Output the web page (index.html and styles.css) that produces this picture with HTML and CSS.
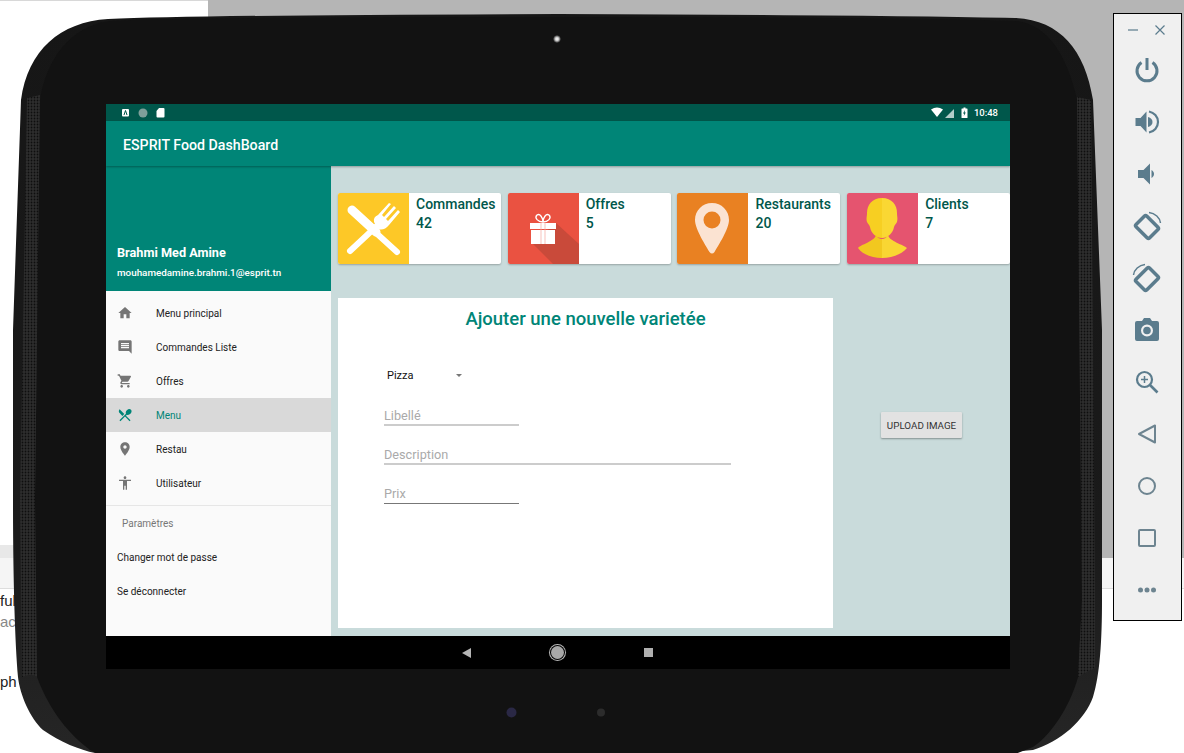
FILE: index.html
```html
<!DOCTYPE html>
<html lang="fr">
<head>
    <meta charset="UTF-8">
    <title>ESPRIT Food DashBoard</title>
    <link rel="stylesheet" href="styles.css">
</head>
<body>
<div class="desk">
    <div class="desk-top">
        <div class="desk-white"></div>
        <div class="desk-gray"></div>
    </div>
    <div class="desk-band">
        <div class="desk-band-left"></div>
        <div class="desk-gray"></div>
    </div>
    <div class="desk-strip"></div>
    <div class="desk-text">
        <p class="line-ful">ful</p>
        <p class="line-ace">ace</p>
        <p class="line-ph">ph</p>
    </div>
</div>

<svg class="shell" width="1184" height="753" viewBox="0 0 1184 753">
    <defs>
        <pattern id="grille" width="3" height="3" patternUnits="userSpaceOnUse">
            <rect width="3" height="3" fill="#2e2e2e"/>
            <circle cx="1.500" cy="1.500" r="0.900" fill="#0e0e0e"/>
        </pattern>
        <radialGradient id="lens">
            <stop offset="0" stop-color="#ffffff"/>
            <stop offset="0.450" stop-color="#c8c8c8"/>
            <stop offset="1" stop-color="#121212"/>
        </radialGradient>
        <linearGradient id="rim" x1="0" y1="0" x2="0" y2="1">
            <stop offset="0" stop-color="#161616"/>
            <stop offset="0.700" stop-color="#1a1a1a"/>
            <stop offset="1" stop-color="#262626"/>
        </linearGradient>
    </defs>
    <path fill="url(#rim)" d="M108 19 Q200 15 558 14 Q900 15 1015 18 C1060 20 1085 50 1093 100 L1102 330 L1102 600 C1102 640 1100 675 1093 697 C1085 720 1060 742 1033 750 L1000 753 L1000 760 L95 760 L95 753 C80 750 60 742 43 730 C30 718 20 695 18 677 C15 640 13 580 13 500 L13 330 L21 100 C28 50 60 22 108 19 Z"/>
    <path fill="#121212" d="M110 21 Q200 17 558 17 Q900 17 1015 21 C1050 24 1068 60 1077 100 L1082 600 L1078 677 C1072 700 1055 732 1033 747 L1000 760 L110 760 L90 750 C70 735 50 712 37 677 L35 500 L40 100 C46 60 70 26 110 21 Z"/>
    <path fill="url(#grille)" d="M27 98 L40 95 L35 500 L37 677 Q30 672 22 678 L20 500 Z"/>
    <path fill="url(#grille)" d="M1077 97 L1091 100 L1095 600 L1095 668 Q1086 672 1078 677 L1082 600 Z"/>
    <circle cx="557" cy="39" r="4" fill="url(#lens)"/>
    <circle cx="511.500" cy="712.500" r="5" fill="#2a2845"/>
    <circle cx="601" cy="712.500" r="4" fill="#2c2c2c"/>
</svg>

<div class="screen">
    <div class="statusbar">
        <svg class="st-icon" width="44" height="12" viewBox="0 0 44 12">
            <rect x="0" y="2" width="7" height="7.500" rx="1" fill="#fff"/>
            <path d="M2 8l1.500-4.500l1.500 4.500" fill="none" stroke="#00574b" stroke-width="1"/>
            <circle cx="21" cy="6" r="4.500" fill="#7f9f9a"/>
            <path d="M37 1h4.500a1 1 0 0 1 1 1v7.500a1 1 0 0 1-1 1h-6a1 1 0 0 1-1-1v-5.500z" fill="#fff"/>
        </svg>
        <div class="st-right">
            <svg width="40" height="12" viewBox="0 0 40 12">
                <path d="M0 2.500Q6-1.500 12 2.500L6 10z" fill="#fff"/>
                <path d="M14 11L23 2V11z" fill="#fff" opacity="0.700"/>
                <path d="M31 1.500h1.500v-1h2v1H36a.5.5 0 0 1 .5.5v8.500a.5.5 0 0 1-.5.5h-5a.5.5 0 0 1-.5-.5V2a.5.5 0 0 1 .5-.5z" fill="#fff"/>
                <path d="M34 3l-2 3.500h1.200l-.4 2.500l2-3.500h-1.200z" fill="#00574b"/>
            </svg>
            <span class="st-time">10:48</span>
        </div>
    </div>
    <header class="toolbar">ESPRIT Food DashBoard</header>
    <div class="content">
        <aside class="drawer">
            <div class="drawer-head">
                <div class="drawer-name">Brahmi Med Amine</div>
                <div class="drawer-mail">mouhamedamine.brahmi.1@esprit.tn</div>
            </div>
            <ul class="menu">
                <li class="menu-item">
                    <svg class="menu-icon" viewBox="0 0 24 24"><path d="M10 20v-6h4v6h5v-8h3L12 3 2 12h3v8z"/></svg>
                    Menu principal
                </li>
                <li class="menu-item">
                    <svg class="menu-icon" viewBox="0 0 24 24"><path d="M21.990 4c0-1.100-.890-2-1.990-2H4c-1.100 0-2 .900-2 2v12c0 1.100.900 2 2 2h14l4 4-.010-18zM18 14H6v-2h12v2zm0-3H6V9h12v2zm0-3H6V6h12v2z"/></svg>
                    Commandes Liste
                </li>
                <li class="menu-item">
                    <svg class="menu-icon" viewBox="0 0 24 24"><path d="M7 18c-1.100 0-1.990.900-1.990 2S5.900 22 7 22s2-.900 2-2-.900-2-2-2zM1 2v2h2l3.600 7.590-1.350 2.450c-.160.280-.250.610-.250.960 0 1.100.900 2 2 2h12v-2H7.420c-.140 0-.250-.110-.250-.250l.030-.120.900-1.630h7.450c.750 0 1.410-.410 1.750-1.030l3.580-6.490c.080-.140.120-.310.120-.480 0-.550-.450-1-1-1H5.210l-.940-2H1zm16 16c-1.100 0-1.990.900-1.990 2s.890 2 1.990 2 2-.900 2-2-.900-2-2-2z"/></svg>
                    Offres
                </li>
                <li class="menu-item menu-item-active">
                    <svg class="menu-icon" viewBox="0 0 24 24"><path d="M8.100 13.340l2.830-2.830L3.910 3.500c-1.560 1.560-1.560 4.090 0 5.660l4.190 4.180zm6.780-1.810c1.530.710 3.680.210 5.270-1.380 1.910-1.910 2.280-4.650.810-6.120-1.460-1.460-4.200-1.100-6.120.810-1.590 1.590-2.090 3.740-1.380 5.270L3.700 19.870l1.410 1.410L12 14.410l6.880 6.880 1.410-1.410L13.410 13l1.470-1.470z"/></svg>
                    Menu
                </li>
                <li class="menu-item">
                    <svg class="menu-icon" viewBox="0 0 24 24"><path d="M12 2C8.130 2 5 5.130 5 9c0 5.250 7 13 7 13s7-7.750 7-13c0-3.870-3.130-7-7-7zm0 9.500c-1.380 0-2.500-1.120-2.500-2.500s1.120-2.500 2.500-2.500 2.500 1.120 2.500 2.500-1.120 2.500-2.500 2.500z"/></svg>
                    Restau
                </li>
                <li class="menu-item">
                    <svg class="menu-icon" viewBox="0 0 24 24"><path d="M12 2c1.100 0 2 .900 2 2s-.900 2-2 2-2-.900-2-2 .900-2 2-2zm9 7h-6v13h-2v-6h-2v6H9V9H3V7h18v2z"/></svg>
                    Utilisateur
                </li>
            </ul>
            <div class="menu-group">Paramètres</div>
            <div class="menu-plain">Changer mot de passe</div>
            <div class="menu-plain">Se déconnecter</div>
        </aside>
        <main class="main">
            <div class="stats">
                <div class="stat">
                    <svg class="stat-img" viewBox="0 0 71 71">
                        <rect width="71" height="71" fill="#fdc827"/>
                        <path d="M14 18L59 59" stroke="#fff" stroke-width="6" stroke-linecap="round"/>
                        <path d="M14 17L38 39" stroke="#fff" stroke-width="9" stroke-linecap="round"/>
                        <path d="M12 58L42 30" stroke="#fff" stroke-width="6" stroke-linecap="round"/>
                        <path d="M36 29Q35 24 40 22L51 10L53 11L44 22L46 24L56 13L58 15L48 26L50 28L60 17L62 19L51 32Q46 38 40 36Z" fill="#fff"/>
                    </svg>
                    <div class="stat-text"><div>Commandes</div><div>42</div></div>
                </div>
                <div class="stat">
                    <svg class="stat-img" viewBox="0 0 71 71">
                        <rect width="71" height="71" fill="#ea5241"/>
                        <path d="M48 30L71 51V71H45L24 50Z" fill="#c94a3a"/>
                        <rect x="22" y="30" width="26" height="6" fill="#fff"/>
                        <rect x="23" y="37" width="24" height="14" fill="#fff"/>
                        <path d="M33 30V51M37 30V51" stroke="#f3a79d" stroke-width="0.700"/>
                        <path d="M35 29C30 29 26 25 29 22C32 20 35 25 35 29C35 25 38 20 41 22C44 25 40 29 35 29Z" fill="none" stroke="#fff" stroke-width="1.300"/>
                    </svg>
                    <div class="stat-text"><div>Offres</div><div>5</div></div>
                </div>
                <div class="stat">
                    <svg class="stat-img" viewBox="0 0 71 71">
                        <rect width="71" height="71" fill="#e98122"/>
                        <path d="M35 10C25.500 10 18 17.500 18 27C18 36 29 53 32.500 59Q35 62 37.500 59C41 53 52 36 52 27C52 17.500 44.500 10 35 10Z" fill="#fbe3d2"/>
                        <circle cx="35" cy="27" r="8.500" fill="#e98122"/>
                    </svg>
                    <div class="stat-text"><div>Restaurants</div><div>20</div></div>
                </div>
                <div class="stat">
                    <svg class="stat-img" viewBox="0 0 71 71">
                        <rect width="71" height="71" fill="#e5546f"/>
                        <path d="M35 5C25 5 20 12 20 20C20 24 19 25 20 29C21 31 22 31 23 34C24 40 29 45 35 45Z" fill="#f7cf22"/>
                        <path d="M35 5C45 5 50 12 50 20C50 24 51 25 50 29C49 31 48 31 47 34C46 40 41 45 35 45Z" fill="#fad733"/>
                        <path d="M29 42C28 48 13 52 11 55C15 61 25 65 35 65V46Q31 46 29 42Z" fill="#f2c81f"/>
                        <path d="M41 42C42 48 57 52 60 55C55 61 45 65 35 65V46Q39 46 41 42Z" fill="#f9d633"/>
                    </svg>
                    <div class="stat-text"><div>Clients</div><div>7</div></div>
                </div>
            </div>
            <div class="lower">
                <form class="form-card">
                    <h1 class="form-title">Ajouter une nouvelle varietée</h1>
                    <div class="select-row"><span class="select-value">Pizza</span><span class="select-arrow"></span></div>
                    <div class="field field-short">Libellé</div>
                    <div class="field field-long">Description</div>
                    <div class="field field-short field-dark">Prix</div>
                </form>
                <div class="upload-col"><button class="upload-btn" type="button">UPLOAD IMAGE</button></div>
            </div>
        </main>
    </div>
    <nav class="navbar">
        <svg width="10" height="10" viewBox="0 0 10 10"><path d="M0 5L9 0V10Z" fill="#b5b5b5"/></svg>
        <span class="nav-home"></span>
        <span class="nav-square"></span>
    </nav>
</div>

<div class="emu-bar">
    <div class="emu-top">
        <svg class="emu-small" viewBox="0 0 12 12"><path d="M1 6H11" fill="none" stroke="#5b7c8d" stroke-width="1.200"/></svg>
        <svg class="emu-small" viewBox="0 0 12 12"><path d="M1.500 1.500L10.500 10.500M10.500 1.500L1.500 10.500" fill="none" stroke="#5b7c8d" stroke-width="1.200"/></svg>
    </div>
    <svg class="emu-icon" viewBox="0 0 26 26"><path d="M13 1V13M7.500 5.500A10 10 0 1 0 18.500 5.500" fill="none" stroke="#5b7c8d" stroke-width="3"/></svg>
    <svg class="emu-icon" viewBox="0 0 26 26"><path d="M1.500 9v8h5l6 6.500V2.500L6.500 9z" fill="#5b7c8d"/><path d="M14 8c3 .8 4.500 2.700 4.500 5s-1.500 4.200-4.500 5z" fill="#5b7c8d"/><path d="M15 2.500c5 1 9 5 9 10.500s-4 9.500-9 10.500" fill="none" stroke="#5b7c8d" stroke-width="2.200"/></svg>
    <svg class="emu-icon" viewBox="0 0 26 26"><path d="M4 9v8h5.500l6.500 6.500V2.500L9.500 9z" fill="#5b7c8d"/><path d="M17.500 9c1.500.8 2.500 2.300 2.500 4s-1 3.200-2.500 4z" fill="#5b7c8d"/></svg>
    <svg class="emu-icon emu-icon-wide" viewBox="0 0 30 30"><rect x="5.500" y="8.500" width="19" height="15" rx="1.500" transform="rotate(45 15 16)" fill="none" stroke="#5b7c8d" stroke-width="3.500"/><path d="M17 1.500C23 2 28 7 28.500 12" fill="none" stroke="#5b7c8d" stroke-width="1.500"/></svg>
    <svg class="emu-icon emu-icon-wide" viewBox="0 0 30 30"><rect x="5.500" y="8.500" width="19" height="15" rx="1.500" transform="rotate(-45 15 16)" fill="none" stroke="#5b7c8d" stroke-width="3.500"/><path d="M13 1.500C7 2 2 7 1.500 12" fill="none" stroke="#5b7c8d" stroke-width="1.500"/></svg>
    <svg class="emu-icon" viewBox="0 0 26 26"><path fill-rule="evenodd" d="M3 4h5l2-3h6l2 3h5a2 2 0 0 1 2 2v16a2 2 0 0 1-2 2H3a2 2 0 0 1-2-2V6a2 2 0 0 1 2-2zM13 7.500a6 6 0 1 0 0 12a6 6 0 1 0 0-12z" fill="#5b7c8d"/><circle cx="13" cy="13.500" r="3.800" fill="#5b7c8d"/></svg>
    <svg class="emu-icon" viewBox="0 0 26 26"><circle cx="10.500" cy="10.500" r="7.500" fill="none" stroke="#5b7c8d" stroke-width="2.200"/><path d="M16 16L23.500 23.500" stroke="#5b7c8d" stroke-width="2.600"/><path d="M10.500 7v7M7 10.500h7" stroke="#5b7c8d" stroke-width="1.500"/></svg>
    <svg class="emu-icon" viewBox="0 0 26 26"><path d="M5 13L21 4.500V21.500Z" fill="none" stroke="#6d8490" stroke-width="2" stroke-linejoin="round"/></svg>
    <svg class="emu-icon" viewBox="0 0 26 26"><circle cx="13" cy="13" r="8" fill="none" stroke="#6d8490" stroke-width="2"/></svg>
    <svg class="emu-icon" viewBox="0 0 26 26"><rect x="5" y="5" width="16" height="16" rx="1" fill="none" stroke="#6d8490" stroke-width="2"/></svg>
    <svg class="emu-icon emu-icon-last" viewBox="0 0 26 26"><circle cx="6.500" cy="13" r="2.500" fill="#6d8490"/><circle cx="13" cy="13" r="2.500" fill="#6d8490"/><circle cx="19.500" cy="13" r="2.500" fill="#6d8490"/></svg>
</div>
</body>
</html>
```

FILE: styles.css
```css
*{margin: 0;padding: 0;list-style: none;box-sizing: border-box;}
html,body{width: 1184px;height: 753px;overflow: hidden;background: #ffffff;}
body{position: relative;font-family: "Roboto","Liberation Sans",sans-serif;}

/* desktop behind the emulator */
.desk{width: 1184px;height: 753px;}
.desk-top{display: flex;height: 545px;}
.desk-white{width: 208px;background: #ffffff;border-top: 1px solid #d8d8d8;}
.desk-gray{flex: 1;background: #b5b5b5;}
.desk-band{display: flex;height: 13px;}
.desk-band-left{width: 208px;background: #e8e8e8;}
.desk-strip{height: 31px;background: #f5f5f5;border-bottom: 1px solid #dddddd;}
.desk-text{font-family: "Liberation Sans",sans-serif;font-size: 15px;color: #222222;}
.line-ful{margin-top: 4px;line-height: 16px;}
.line-ace{margin-top: 5px;line-height: 16px;color: #888888;}
.line-ph{margin-top: 44px;line-height: 16px;}

.shell{position: absolute;left: 0;top: 0;}

/* android screen */
.screen{
    position: absolute;
    left: 106px;
    top: 104px;
    width: 904px;
    height: 565px;
    display: flex;
    flex-direction: column;
    overflow: hidden;
}
.statusbar{
    height: 17px;
    flex: none;
    background: #00574b;
    display: flex;
    align-items: center;
    justify-content: space-between;
    padding: 0 12px 0 16px;
    color: #ffffff;
}
.st-icon{display: block;}
.st-right{display: flex;align-items: center;gap: 3px;}
.st-time{font-size: 9.500px;font-weight: 500;}
.toolbar{
    height: 45px;
    flex: none;
    background: #008577;
    color: #ffffff;
    font-size: 14.200px;
    font-weight: 500;
    line-height: 48px;
    padding-left: 17px;
    box-shadow: 0 1px 2px rgba(0,0,0,.3);
    position: relative;
    z-index: 1;
}
.content{flex: 1;display: flex;min-height: 0;}

.drawer{width: 225px;flex: none;background: #fafafa;}
.drawer-head{
    height: 125px;
    background: #008577;
    color: #ffffff;
    padding: 79px 0 0 11px;
    font-weight: 500;
}
.drawer-name{font-size: 12.700px;line-height: 16px;font-weight: 700;}
.drawer-mail{font-size: 9.850px;line-height: 12px;margin-top: 6px;}
.menu{padding-top: 5px;padding-bottom: 5px;border-bottom: 1px solid #e6e6e6;}
.menu-item{
    height: 34px;
    display: flex;
    align-items: center;
    padding-left: 11px;
    font-size: 10px;
    color: #222222;
}
.menu-icon{width: 16px;height: 16px;fill: #757575;margin-right: 23px;flex: none;}
.menu-item-active{background: #d9d9d9;color: #008577;}
.menu-item-active .menu-icon{fill: #008577;}
.menu-group{height: 34px;line-height: 36px;padding-left: 16px;font-size: 10px;color: #777777;}
.menu-plain{height: 34px;line-height: 36px;padding-left: 11px;font-size: 10px;color: #222222;}

.main{flex: 1;background: #c9dbdb;padding: 27px 0 8px 7px;display: flex;flex-direction: column;}
.stats{display: flex;gap: 6.900px;height: 71px;flex: none;}
.stat{
    flex: 1;
    background: #ffffff;
    border-radius: 2px;
    box-shadow: 0 1px 2px rgba(0,0,0,.25);
    display: flex;
    overflow: hidden;
}
.stat-img{width: 71px;height: 71px;flex: none;display: block;}
.stat-text{padding: 2px 0 0 7px;font-size: 14px;font-weight: 500;line-height: 19px;color: #00574b;}

.lower{flex: 1;display: flex;margin-top: 34px;min-height: 0;}
.form-card{width: 495px;flex: none;background: #ffffff;padding: 10px 0 0 46px;}
.form-title{
    font-size: 18.500px;
    font-weight: 500;
    line-height: 22px;
    color: #008577;
    text-align: center;
    margin-left: -46px;
}
.select-row{display: flex;align-items: center;height: 20px;margin-top: 35px;padding-left: 3px;}
.select-value{width: 69px;font-size: 11px;color: #111111;}
.select-arrow{border: 3.500px solid transparent;border-top: 3.500px solid #777777;border-bottom: 0;}
.field{
    height: 21px;
    margin-top: 18px;
    font-size: 12.700px;
    line-height: 22px;
    color: #aaaaaa;
    border-bottom: 2px solid #cccccc;
}
.select-row + .field{margin-top: 20px;}
.field-short{width: 135px;}
.field-long{width: 347px;}
.field-dark{border-bottom: 1px solid #777777;}
.upload-col{flex: 1;display: flex;justify-content: center;padding-top: 114px;}
.upload-btn{
    width: 81px;
    height: 26px;
    border: 0;
    border-radius: 1px;
    background: #e2e2e2;
    box-shadow: 0 1px 2px rgba(0,0,0,.35);
    color: #333333;
    font-family: inherit;
    font-size: 9.800px;
    font-weight: 400;
    padding-top: 1px;
}

.navbar{
    height: 33px;
    flex: none;
    background: #000000;
    display: flex;
    align-items: center;
    padding-left: 356px;
    gap: 0;
}
.nav-home{
    width: 13px;
    height: 13px;
    margin-left: 79px;
    border-radius: 50%;
    background: #a8a8a8;
    box-shadow: 0 0 0 1px #000000,0 0 0 2px #b8b8b8;
}
.nav-square{width: 9px;height: 9px;margin-left: 80px;background: #b0b0b0;}

/* emulator side panel */
.emu-bar{
    position: absolute;
    left: 1113px;
    top: 13px;
    width: 69px;
    height: 608px;
    background: #f0f0f0;
    border: 1px solid #000000;
    padding-right: 2px;
    display: flex;
    flex-direction: column;
    align-items: center;
}
.emu-top{flex: none;display: flex;justify-content: space-between;align-self: stretch;padding: 10px 13px 0 13px;height: 43px;margin-bottom: 0;}
.emu-small{width: 12px;height: 12px;}
.emu-icon{width: 26px;height: 26px;flex: none;margin-bottom: 26px;}
.emu-icon-wide{width: 30px;height: 30px;margin-top: -2px;margin-bottom: 24px;}
.emu-icon-last{margin-bottom: 0;}
```
